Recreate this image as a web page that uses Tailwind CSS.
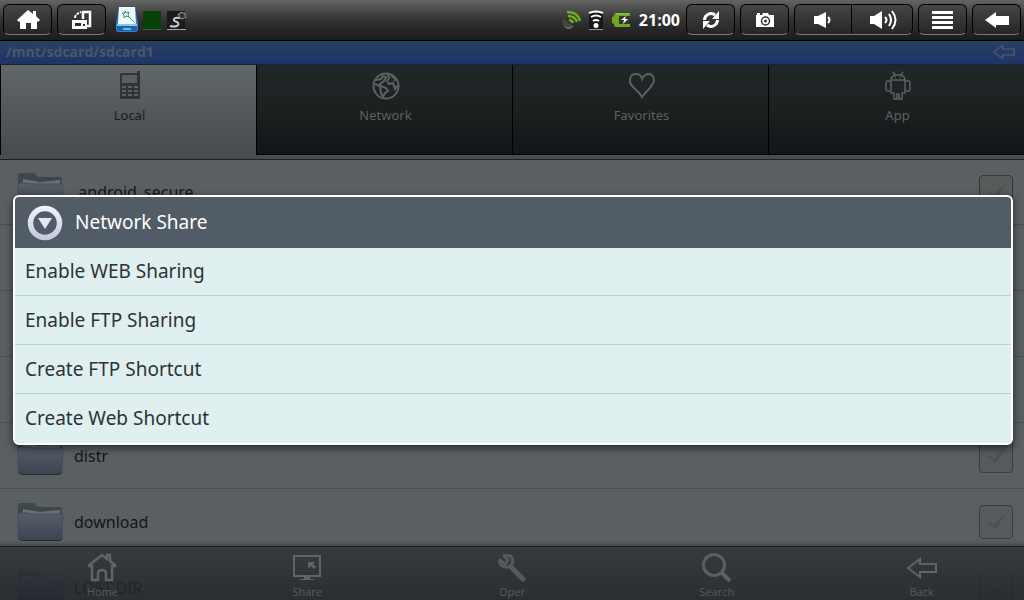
<!DOCTYPE html>
<html lang="en">
  <head>
    <meta charset="UTF-8">
    <meta name="viewport" content="width=device-width, initial-scale=1.0">
    <title>File Manager</title>
    <script src="https://cdn.jsdelivr.net/npm/@tailwindcss/browser@4"></script>
  </head>

  <body class="relative flex h-screen flex-col overflow-hidden bg-[#5a6061] font-['Open_Sans','Noto_Sans',sans-serif]">

    <!-- shared icons -->
    <svg class="absolute size-0">
      <symbol id="folder" viewBox="0 0 48 42">
        <path d="M2 8V4q0-2 2-2h14l4 4h22q2 0 2 2v10H2z" fill="#3f464e"/>
        <path d="M7 8l17 3 20-2v9H6z" fill="#697074"/>
        <path d="M2 15q0-3 3-3h5q3 0 5 1h28q4 0 4 3l-1 20q0 3-3 3H5q-3 0-3-3z" fill="url(#folderFill)" stroke="#474e57"/>
        <path d="M3 37.500q1 2 3 2h37q2 0 3-2" fill="none" stroke="#23282e"/>
      </symbol>
      <symbol id="tick" viewBox="0 0 34 34">
        <path d="M8 18l3-1 4 3 12-12-10 16h-2l-2-4z" fill="#4a4f50" stroke="#505657"/>
      </symbol>
      <symbol id="arrow" viewBox="0 0 32 22">
        <path d="M2 11L14 2v5h16v8H14v5z" fill="none" stroke="currentColor" stroke-width="2"/>
      </symbol>
      <linearGradient id="folderFill" x1="0" y1="0" x2="0" y2="1">
        <stop offset="0" stop-color="#575e67"/>
        <stop offset="1" stop-color="#3c4452"/>
      </linearGradient>
    </svg>

    <!-- system bar -->
    <header class="flex h-10 shrink-0 items-start gap-[5px] bg-linear-to-b from-[#636563] via-[#323232] to-[#1b1b1b] px-[3px] pt-1 text-white">
      <button aria-label="Home" class="flex h-[31px] w-[49px] items-center justify-center rounded-md border border-black border-b-[#777] bg-linear-to-b from-[#454746] to-[#252625]">
        <svg class="h-5 w-6" viewBox="0 0 24 20"><path d="M12 0l5 4V1h3v5l4 4-2 2-1-1v8h-6v-6h-5v6H4v-8l-1 1-2-2z" fill="#fff"/></svg>
      </button>
      <button aria-label="Recent apps" class="flex h-[31px] w-[49px] items-center justify-center rounded-md border border-black border-b-[#777] bg-linear-to-b from-[#454746] to-[#252625]">
        <svg class="h-5 w-5" viewBox="0 0 20 20"><path d="M11 9V2h7v14h-3" fill="none" stroke="#fff" stroke-width="2.500"/><path d="M0 10h15v9H0z" fill="#fff"/><path d="M3 13h6v3H3zm8 1h2v2h-2z" fill="#2c2d2c"/><path d="M3 8q0-4 6-6" fill="none" stroke="#fff" stroke-width="2" stroke-dasharray="3 1"/></svg>
      </button>
      <div class="ml-1 flex h-8 grow items-center gap-1">
        <svg class="h-8 w-6" viewBox="0 0 24 32"><path d="M4 4h16l3 15v6q0 3-3 3H4q-3 0-3-3v-6z" fill="#2e83cf"/><path d="M2 22h20v3q0 2-2 2H4q-2 0-2-2z" fill="#205fab"/><path d="M8 24h8v2H8z" fill="#6db7ea"/><path d="M4 3h16l1 17H3z" fill="#eefaff"/><path d="M2 20h20v2H2z" fill="#83c8f1"/><path d="M13 12l6 6M10 7l1 2 3-1-1 3 1 2-3-1-2 2v-3L7 9h3z" fill="none" stroke="#3d9354"/></svg>
        <svg class="h-5 w-[18px]" viewBox="0 0 18 20"><rect width="18" height="18" y="1" fill="#064106"/><path d="M0 19.500h18" stroke="#465146"/></svg>
        <svg class="h-5 w-6" viewBox="0 0 24 20"><path d="M2 1h18v18H2z" fill="#1b1b1b"/><path d="M2 19.500h19" stroke="#aaa"/><path d="M15 8q-5-1-6 1-1 2 3 3 3 2 0 4-3 1-7 0" fill="none" stroke="#ccc" stroke-width="2"/><path d="M13 4l2 0 1-2 2 1 2 0 0 2 1 2-2 1-2 1-2-1-1-2z" fill="#333" stroke="#999"/></svg>
      </div>
      <div class="mr-px flex h-8 items-center gap-[7px]">
        <svg class="h-5 w-5" viewBox="0 0 20 20" fill="none"><path d="M2 8q-3 7 3 10 5 2 7-2z" fill="#444"/><path d="M12 16q-4 4-8 1" stroke="#888"/><path d="M8 10q3 0 4 3M7 6q7 0 9 6M6 2q11 0 13 9" stroke="#71ad1b" stroke-width="2.500"/></svg>
        <svg class="h-5 w-4" viewBox="0 0 16 20"><path d="M1 3h14v16H1z" fill="#181818"/><path d="M1 19.500h14" stroke="#999"/><path d="M1 3q7-3 14 0M3 7q5-3 10 0M5 11q3-2 6 0" fill="none" stroke="#fff" stroke-width="2"/><circle cx="8" cy="15.500" r="2.500" fill="#fff"/></svg>
        <svg class="h-4 w-5" viewBox="0 0 20 16"><path d="M5 1h14v14H5q-2 0-2-3l-2-1V5l2-1q0-3 2-3z" fill="#6fa61d"/><path d="M8 4h11v8H8z" fill="#303b22"/><path d="M5 2h13" stroke="#a2cf55"/><path d="M15 4l-5 4h3l-1 4 5-5h-3z" fill="#fff"/></svg>
        <time class="ml-px text-base leading-8 font-bold">21:00</time>
      </div>
      <button aria-label="Refresh" class="flex h-[31px] w-[49px] items-center justify-center rounded-md border border-black border-b-[#777] bg-linear-to-b from-[#454746] to-[#252625]">
        <svg class="h-[18px] w-[18px]" viewBox="0 0 18 18"><path d="M2.500 9A6.500 6.500 0 0 1 13 4M15.500 9A6.500 6.500 0 0 1 5 14" fill="none" stroke="#fff" stroke-width="3"/><path d="M17 0v8h-7zM1 18v-8h7z" fill="#fff"/></svg>
      </button>
      <button aria-label="Screenshot" class="flex h-[31px] w-[49px] items-center justify-center rounded-md border border-black border-b-[#777] bg-linear-to-b from-[#454746] to-[#252625]">
        <svg class="h-4 w-5" viewBox="0 0 20 16"><path d="M1 3h1V1h3v2h2l1-2h5l1 2h5v12H1z" fill="#fff"/><circle cx="10.500" cy="9" r="4" fill="#fff" stroke="#333" stroke-width="1.500"/><circle cx="10.500" cy="9" r="1.500" fill="#333"/></svg>
      </button>
      <div class="flex h-[31px] w-[119px] rounded-md border border-black border-b-[#777] bg-linear-to-b from-[#454746] to-[#252625]">
        <button aria-label="Volume down" class="flex flex-1 items-center justify-center border-r border-black">
          <svg class="h-4 w-[18px]" viewBox="0 0 18 16"><path d="M0 4h4l8-4v16l-8-4H0z" fill="#fff"/><path d="M14 5q3 3 0 6" fill="none" stroke="#fff" stroke-width="2"/></svg>
        </button>
        <button aria-label="Volume up" class="flex flex-1 items-center justify-center pl-1">
          <svg class="h-5 w-7" viewBox="0 0 28 20"><path d="M0 6h4l8-5v18l-8-5H0z" fill="#fff"/><path d="M15 7q3 3 0 6M19 4q4 6 0 12M22 1q7 9 0 18" fill="none" stroke="#fff" stroke-width="2"/></svg>
        </button>
      </div>
      <button aria-label="Menu" class="flex h-[31px] w-[49px] items-center justify-center rounded-md border border-black border-b-[#777] bg-linear-to-b from-[#454746] to-[#252625]">
        <svg class="h-[18px] w-[21px]" viewBox="0 0 21 18"><path d="M0 1.500h21M0 6.500h21M0 11.500h21M0 16.500h21" stroke="#fff" stroke-width="3"/></svg>
      </button>
      <button aria-label="Back" class="flex h-[31px] w-[49px] items-center justify-center rounded-md border border-black border-b-[#777] bg-linear-to-b from-[#454746] to-[#252625]">
        <svg class="h-4 w-6" viewBox="0 0 24 16"><path d="M0 8l11-8v4h13v9H11v3z" fill="#fff"/></svg>
      </button>
    </header>

    <!-- current path -->
    <div class="flex h-[25px] shrink-0 items-center justify-between border-y border-t-black border-b-[#14213a] bg-linear-to-b from-[#2a4063] to-[#1d3567] pr-2 pl-1.5 text-[#4b566b]">
      <p class="pb-0.5 text-sm leading-5 font-bold">/mnt/sdcard/sdcard1</p>
      <a href="#" aria-label="Up" class="pb-0.5"><svg class="h-4 w-6"><use href="#arrow"/></svg></a>
    </div>

    <!-- tabs -->
    <nav class="grid h-[90px] shrink-0 grid-cols-4 font-['Noto_Sans',sans-serif] text-[13px] leading-5 text-[#5c6062]">
      <a href="#" class="flex flex-col items-center gap-1 border-l border-black bg-linear-to-b from-[#626768] via-[#53585c] to-[#474c50] pt-1.5 pl-0.5 text-[#191d1f]">
        <svg class="h-[30px] w-7" viewBox="0 0 28 30"><path d="M5 2h16V0h3v28H4V3z" fill="#303436"/><path d="M6 4h15v8H6z" fill="#585e60"/><path d="M6 15h4v2H6zm6 0h4v2h-4zm6 0h4v2h-4zM6 19h4v2H6zm6 0h4v2h-4zm6 0h4v2h-4zM6 23h4v2H6zm6 0h4v2h-4zm6 0h4v2h-4z" fill="#5a6062"/></svg>
        Local
      </a>
      <a href="#" class="flex flex-col items-center gap-1 border-b border-l border-black bg-linear-to-b from-[#20272a] via-[#1d201f] to-[#111518] pt-1.5 pl-0.5">
        <svg class="h-[30px] w-[30px]" viewBox="0 0 30 30" fill="none" stroke="#5c6062" stroke-width="2"><circle cx="15" cy="15" r="12.500"/><path d="M5 9l5-1 2-3 3 1-2 4-4 3 1 2 5 2 2 3-3 2-2 4-2-4-1-7-5-2M17 3l1 4-2 3 2 3 4-1 2 6 3-4M20 5l5 3-2 2"/></svg>
        Network
      </a>
      <a href="#" class="flex flex-col items-center gap-1 border-b border-l border-black bg-linear-to-b from-[#20272a] via-[#1d201f] to-[#111518] pt-1.5 pl-0.5">
        <svg class="h-[30px] w-[30px]" viewBox="0 0 30 30"><path d="M15 26Q13 22 7 17 2 12 3 8 4 3 9 3q5 0 6 5 2-5 7-5 5 1 5 6 0 3-5 9-4 4-7 8z" fill="none" stroke="#5c6062" stroke-width="2"/></svg>
        Favorites
      </a>
      <a href="#" class="flex flex-col items-center gap-1 border-b border-l border-black bg-linear-to-b from-[#20272a] via-[#1d201f] to-[#111518] pt-1.5 pl-0.5">
        <svg class="h-[30px] w-[30px]" viewBox="0 0 30 30" fill="none" stroke="#5c6062" stroke-width="1.500"><path d="M10 1l2 3M20 1l-2 3M8 9q0-5 7-5t7 5zM8 9v13h3v6h3v-5h2v5h3v-6h3V9M7 10H4q-1 0-1 2v6q0 2 1 2h3M23 10h3q1 0 1 2v6q0 2-1 2h-3"/><path d="M12 6.500h1M17 6.500h1"/></svg>
        App
      </a>
    </nav>
    <div class="h-[5px] shrink-0 border-b border-[#1c2022] bg-[#474c4e]"></div>

    <!-- files -->
    <main class="min-h-0 grow overflow-hidden font-['Noto_Sans',sans-serif] text-base text-[#131718]">
      <ul>
        <li class="flex h-[65px] items-center gap-[10px] border-b border-[#4a4f51] pr-[11px] pl-4">
          <svg class="h-[42px] w-12"><use href="#folder"/></svg>
          <label for="f1" class="grow">.android_secure</label>
          <span class="grid"><input id="f1" type="checkbox" class="col-start-1 row-start-1 size-[34px] appearance-none rounded border border-[#303b39] bg-[#555c5a]"><svg class="pointer-events-none col-start-1 row-start-1 size-[34px]"><use href="#tick"/></svg></span>
        </li>
        <li class="h-[66px] border-b border-[#4a4f51]"></li>
        <li class="h-[66px] border-b border-[#4a4f51]"></li>
        <li class="h-[66px] border-b border-[#4a4f51]"></li>
        <li class="flex h-[66px] items-center gap-[10px] border-b border-[#4a4f51] pr-[11px] pl-4">
          <svg class="h-[42px] w-12"><use href="#folder"/></svg>
          <label for="f2" class="grow">distr</label>
          <span class="grid"><input id="f2" type="checkbox" class="col-start-1 row-start-1 size-[34px] appearance-none rounded border border-[#3a3f40] bg-[#565b5d]"><svg class="pointer-events-none col-start-1 row-start-1 size-[34px]"><use href="#tick"/></svg></span>
        </li>
        <li class="flex h-[66px] items-center gap-[10px] border-b border-[#4a4f51] pr-[11px] pl-4">
          <svg class="h-[42px] w-12"><use href="#folder"/></svg>
          <label for="f3" class="grow">download</label>
          <span class="grid"><input id="f3" type="checkbox" class="col-start-1 row-start-1 size-[34px] appearance-none rounded border border-[#3a3f40] bg-[#565b5d]"><svg class="pointer-events-none col-start-1 row-start-1 size-[34px]"><use href="#tick"/></svg></span>
        </li>
        <li class="flex h-[66px] items-center gap-[10px] border-b border-[#4a4f51] pr-[11px] pl-4">
          <svg class="h-[42px] w-12"><use href="#folder"/></svg>
          <label for="f4" class="grow">LOST.DIR</label>
          <span class="grid"><input id="f4" type="checkbox" class="col-start-1 row-start-1 size-[34px] appearance-none rounded border border-[#3a3f40] bg-[#565b5d]"><svg class="pointer-events-none col-start-1 row-start-1 size-[34px]"><use href="#tick"/></svg></span>
        </li>
      </ul>
    </main>

    <!-- bottom toolbar, lies over the list -->
    <nav class="absolute inset-x-0 bottom-0 grid h-[54px] grid-cols-5 border-t border-[#1b2022] bg-linear-to-b from-[#33393c]/95 to-[#1c2226]/80 text-[11px] leading-4 text-[#565b5e] shadow-[0_-2px_4px_rgba(0,0,0,0.3)]">
      <a href="#" class="flex flex-col items-center pt-[5px]">
        <svg class="h-8 w-8" viewBox="0 0 32 32" fill="none" stroke="#5f6466" stroke-width="2.500"><path d="M2 14L16 3l5 4V3h3v6l6 5M2 14h4v14h6v-7q0-3 4-3t4 3v7h6V14h4"/></svg>
        <span>Home</span>
      </a>
      <a href="#" class="flex flex-col items-center pt-[5px]">
        <svg class="h-8 w-8" viewBox="0 0 32 32"><path d="M3 4h26v20H3z" fill="none" stroke="#5f6466" stroke-width="2"/><path d="M13 25h6v2h4v1H9v-1h4z" fill="#5f6466"/><path d="M17 10h7l-2 2 3 3-2 2-3-3-3 3z" fill="#5f6466"/></svg>
        <span>Share</span>
      </a>
      <a href="#" class="flex flex-col items-center pt-[5px]">
        <svg class="h-8 w-8" viewBox="0 0 32 32" fill="none" stroke="#54595b"><path d="M15 15l12 12" stroke-width="5" stroke-linecap="round"/><path d="M8 4q6-2 8 2 2 5-2 8-5 3-9-1-2-2-1-5l5 4 3-4z" stroke-width="3" stroke-linejoin="round"/></svg>
        <span>Oper</span>
      </a>
      <a href="#" class="flex flex-col items-center pt-[5px]">
        <svg class="h-8 w-8" viewBox="0 0 32 32" fill="none" stroke="#5a5f61"><circle cx="13" cy="13" r="10.500" stroke-width="3"/><path d="M20 20l9 9" stroke-width="4"/></svg>
        <span>Search</span>
      </a>
      <a href="#" class="flex flex-col items-center pt-[5px]">
        <svg class="h-8 w-8 text-[#5f6466]"><use href="#arrow"/></svg>
        <span>Back</span>
      </a>
    </nav>

    <!-- dialog -->
    <div class="absolute inset-x-0 top-10 bottom-0 flex items-center pr-[11px] pl-[13px]">
      <section role="dialog" aria-labelledby="dialogTitle" class="w-full overflow-hidden rounded-md border-2 border-white bg-[#e0efef] font-['Noto_Sans',sans-serif] text-[19px] shadow-[0_3px_8px_rgba(0,0,0,0.6)]">
        <div class="flex h-[51px] items-center gap-3 bg-linear-to-b from-[#535d65] to-[#505b67] px-3 text-white">
          <svg class="size-9" viewBox="0 0 36 36"><linearGradient id="ring" x1="0" y1="0" x2="0" y2="1"><stop offset="0" stop-color="#eef1f8"/><stop offset="1" stop-color="#c4cbdd"/></linearGradient><circle cx="18" cy="18" r="14.500" fill="none" stroke="url(#ring)" stroke-width="5.500"/><path d="M11 13h14l-7 11z" fill="#e3e8f2"/></svg>
          <h1 id="dialogTitle">Network Share</h1>
        </div>
        <div class="flex flex-col divide-y divide-[#c3cfcf] text-[#2d3335]">
          <button class="h-12 px-2.5 text-left">Enable WEB Sharing</button>
          <button class="h-[49px] px-2.5 text-left">Enable FTP Sharing</button>
          <button class="h-[49px] px-2.5 text-left">Create FTP Shortcut</button>
          <button class="h-[49px] px-2.5 text-left">Create Web Shortcut</button>
        </div>
      </section>
    </div>
  </body>
</html>
